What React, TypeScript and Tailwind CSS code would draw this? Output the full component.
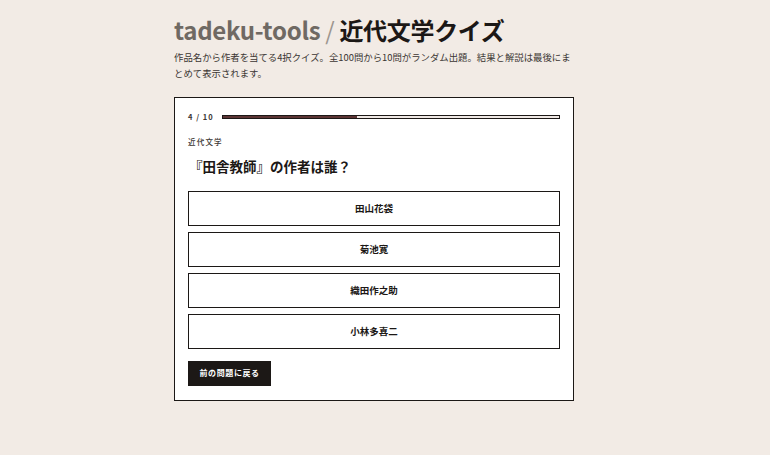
const options = ["田山花袋", "菊池寛", "織田作之助", "小林多喜二"];

export default function App() {
  const current = 4;
  const total = 10;

  return (
    <div
      className="min-h-screen bg-[#f2ebe5] pr-[22px] text-[#1c1816]"
      style={{ fontFamily: '"Noto Sans CJK JP", "Noto Sans", sans-serif' }}
    >
      <div className="mx-auto w-[400px] pt-[12px]">
        {/* Header */}
        <h1 className="text-[24px] font-bold leading-[36px] tracking-[-0.3px]">
          <span className="text-[#6f6963]">tadeku-tools</span>
          <span className="mx-[5px] font-normal text-[#9d968f]">/</span>
          <span>近代文学クイズ</span>
        </h1>
        <p className="mt-[1px] text-[9.4px] leading-[16px] text-[#3b3633]">
          作品名から作者を当てる4択クイズ。全100問から10問がランダム出題。結果と解説は最後にまとめて表示されます。
        </p>

        {/* Quiz card */}
        <div className="mt-[16px] border border-[#1c1816] bg-white px-[13px] pb-[14px] pt-[13px]">
          <div className="flex items-center gap-[8px]">
            <span className="text-[7.5px] font-bold tracking-[1px] text-[#3b3633]">
              {current} / {total}
            </span>
            <div className="h-[4px] flex-1 border border-[#1c1816] bg-[#efe8e4]">
              <div className="h-full w-[40%] bg-[#5c3434]" />
            </div>
          </div>

          <p className="mt-[14px] text-[7.5px] font-medium tracking-[1.2px] text-[#3b3633]">
            近代文学
          </p>
          <h2 className="mt-[8px] pl-[1px] text-[13.5px] font-bold leading-[20px]">
            『田舎教師』の作者は誰？
          </h2>

          <div className="mt-[15px] flex flex-col gap-[6px]">
            {options.map((o) => (
              <button
                key={o}
                className="h-[35px] w-full border border-[#1c1816] bg-white text-[9.5px] font-bold"
              >
                {o}
              </button>
            ))}
          </div>

          <button className="mt-[12px] h-[25px] bg-[#1c1816] px-[11.5px] text-[8px] font-bold tracking-[0.6px] text-white">
            前の問題に戻る
          </button>
        </div>
      </div>
    </div>
  );
}
